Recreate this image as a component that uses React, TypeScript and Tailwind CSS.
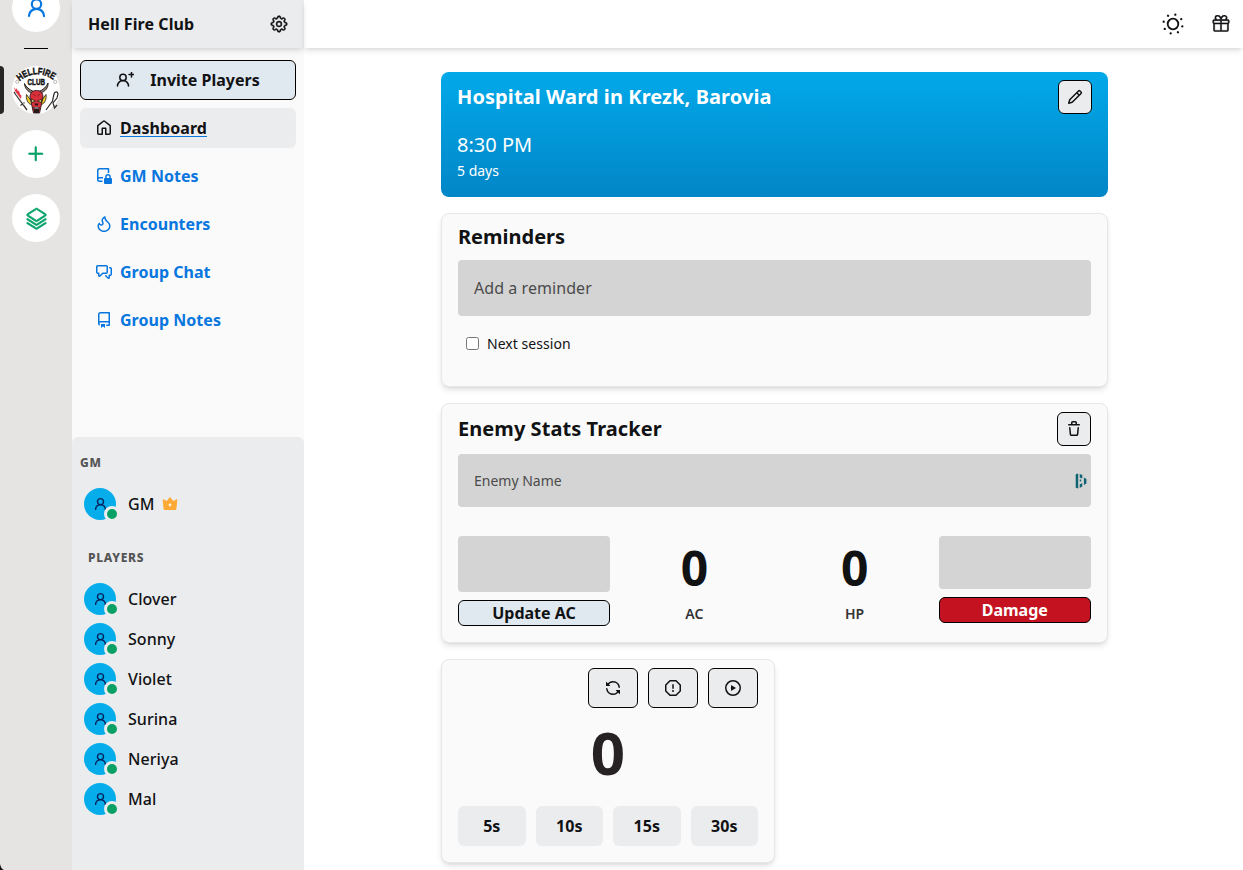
import React from 'react';
import { GoGear, GoGift, GoPlus, GoStack } from 'react-icons/go';

const icons = {
  person:
    'M10.561 8.073a6.005 6.005 0 0 1 3.432 5.142.75.75 0 1 1-1.498.07 4.5 4.5 0 0 0-8.99 0 .75.75 0 0 1-1.498-.07 6.004 6.004 0 0 1 3.431-5.142 3.999 3.999 0 1 1 5.123 0ZM10.5 5a2.5 2.5 0 1 0-5 0 2.5 2.5 0 0 0 5 0Z',
  home:
    'M6.906.664a1.749 1.749 0 0 1 2.187 0l5.25 4.2c.415.332.657.835.657 1.367v7.019A1.75 1.75 0 0 1 13.25 15h-3.5a.75.75 0 0 1-.75-.75V9H7v5.25a.75.75 0 0 1-.75.75h-3.5A1.75 1.75 0 0 1 1 13.25V6.23c0-.531.242-1.034.657-1.366l5.25-4.2Zm1.25 1.171a.25.25 0 0 0-.312 0l-5.25 4.2a.25.25 0 0 0-.094.196v7.019c0 .138.112.25.25.25H5.5V8.25a.75.75 0 0 1 .75-.75h3.5a.75.75 0 0 1 .75.75v5.25h2.75a.25.25 0 0 0 .25-.25V6.23a.25.25 0 0 0-.094-.195Z',
  flame:
    'M9.533.753V.752c.217 2.385 1.463 3.626 2.653 4.81C13.37 6.74 14.498 7.863 14.498 10c0 3.5-3 6-6.5 6S1.5 13.512 1.5 10c0-1.298.536-2.56 1.425-3.286.376-.308.862 0 1.035.454C4.46 8.487 5.581 8.419 6 8c.282-.282.341-.811-.003-1.5C4.34 3.187 7.035.75 8.77.146c.39-.137.726.194.763.607ZM7.998 14.5c2.832 0 5-1.98 5-4.5 0-1.463-.68-2.19-1.879-3.383l-.036-.037c-1.013-1.008-2.3-2.29-2.834-4.434-.322.256-.63.579-.864.953-.432.696-.621 1.58-.046 2.73.473.947.67 2.284-.278 3.232-.61.61-1.545.84-2.403.633a2.79 2.79 0 0 1-1.436-.874A3.198 3.198 0 0 0 3 10c0 2.53 2.164 4.5 4.998 4.5Z',
  chat:
    'M1.75 1h8.5c.966 0 1.75.784 1.75 1.75v5.5A1.75 1.75 0 0 1 10.25 10H7.061l-2.574 2.573A1.458 1.458 0 0 1 2 11.543V10h-.25A1.75 1.75 0 0 1 0 8.25v-5.5C0 1.784.784 1 1.75 1ZM1.5 2.75v5.5c0 .138.112.25.25.25h1a.75.75 0 0 1 .75.75v2.19l2.72-2.72a.749.749 0 0 1 .53-.22h3.5a.25.25 0 0 0 .25-.25v-5.5a.25.25 0 0 0-.25-.25h-8.5a.25.25 0 0 0-.25.25Zm13 2a.25.25 0 0 0-.25-.25h-.5a.75.75 0 0 1 0-1.5h.5c.966 0 1.75.784 1.75 1.75v5.5A1.75 1.75 0 0 1 14.25 12H14v1.543a1.458 1.458 0 0 1-2.487 1.03L9.22 12.28a.749.749 0 0 1 .326-1.275.749.749 0 0 1 .734.215l2.22 2.22v-2.19a.75.75 0 0 1 .75-.75h1a.25.25 0 0 0 .25-.25Z',
  repo:
    'M2 2.5A2.5 2.5 0 0 1 4.5 0h8.75a.75.75 0 0 1 .75.75v12.5a.75.75 0 0 1-.75.75h-2.5a.75.75 0 0 1 0-1.5h1.75v-2h-8a1 1 0 0 0-.714 1.7.75.75 0 1 1-1.072 1.05A2.495 2.495 0 0 1 2 11.5Zm10.5-1h-8a1 1 0 0 0-1 1v6.708A2.486 2.486 0 0 1 4.5 9h8ZM5 12.25a.25.25 0 0 1 .25-.25h3.5a.25.25 0 0 1 .25.25v3.25a.25.25 0 0 1-.4.2l-1.45-1.087a.249.249 0 0 0-.3 0L5.4 15.7a.25.25 0 0 1-.4-.2Z',
  repoLocked:
    'M3.500 0h9A.75.75 0 0 1 13.250.75V5h-1.500V1.500H3.500a1 1 0 0 0-1 1v6.700A2.500 2.500 0 0 1 3.500 9H7v1.500H3.500a1 1 0 0 0 0 2H6.500V14h-3A2.500 2.500 0 0 1 1 11.500v-9A2.500 2.500 0 0 1 3.500 0ZM9.200 10V8.800a2.800 2.800 0 0 1 5.600 0V10h.2a1 1 0 0 1 1 1v4a1 1 0 0 1-1 1H9a1 1 0 0 1-1-1v-4a1 1 0 0 1 1-1Zm1.500 0h2.600V8.800a1.300 1.300 0 0 0-2.600 0Z',
  pencil:
    'M11.013 1.427a1.75 1.75 0 0 1 2.474 0l1.086 1.086a1.75 1.75 0 0 1 0 2.474l-8.61 8.61c-.21.21-.47.364-.756.445l-3.251.93a.75.75 0 0 1-.927-.928l.929-3.25c.081-.286.235-.547.445-.758l8.61-8.61Zm.176 4.823L9.75 4.81l-6.286 6.287a.253.253 0 0 0-.064.108l-.558 1.953 1.953-.558a.253.253 0 0 0 .108-.064Zm1.238-3.763a.25.25 0 0 0-.354 0L10.811 3.75l1.439 1.44 1.263-1.263a.25.25 0 0 0 0-.354Z',
  trash:
    'M11 1.75V3h2.25a.75.75 0 0 1 0 1.5H2.75a.75.75 0 0 1 0-1.5H5V1.75C5 .784 5.784 0 6.75 0h2.5C10.216 0 11 .784 11 1.75ZM4.496 6.675l.66 6.6a.25.25 0 0 0 .249.225h5.19a.25.25 0 0 0 .249-.225l.66-6.6a.75.75 0 0 1 1.492.149l-.66 6.6A1.748 1.748 0 0 1 10.595 15h-5.19a1.75 1.75 0 0 1-1.741-1.575l-.66-6.6a.75.75 0 1 1 1.492-.15ZM6.5 1.75V3h3V1.75a.25.25 0 0 0-.25-.25h-2.5a.25.25 0 0 0-.25.25Z',
  sync:
    'M1.705 8.005a.75.75 0 0 1 .834.656 5.5 5.5 0 0 0 9.592 2.97l-1.204-1.204a.25.25 0 0 1 .177-.427h3.646a.25.25 0 0 1 .25.25v3.646a.25.25 0 0 1-.427.177l-1.38-1.38A7.002 7.002 0 0 1 1.05 8.84a.75.75 0 0 1 .656-.834ZM8 2.5a5.487 5.487 0 0 0-4.131 1.869l1.204 1.204A.25.25 0 0 1 4.896 6H1.25A.25.25 0 0 1 1 5.75V2.104a.25.25 0 0 1 .427-.177l1.38 1.38A7.002 7.002 0 0 1 14.95 7.16a.75.75 0 0 1-1.49.178A5.5 5.5 0 0 0 8 2.5Z',
  stop:
    'M4.47.22A.749.749 0 0 1 5 0h6c.199 0 .389.079.53.22l4.25 4.25c.141.14.22.331.22.53v6a.749.749 0 0 1-.22.53l-4.25 4.25A.749.749 0 0 1 11 16H5a.749.749 0 0 1-.53-.22L.22 11.53A.749.749 0 0 1 0 11V5c0-.199.079-.389.22-.53Zm.84 1.28L1.5 5.31v5.38l3.81 3.81h5.38l3.81-3.81V5.31L10.69 1.5ZM8 4a.75.75 0 0 1 .75.75v3.5a.75.75 0 0 1-1.5 0v-3.5A.75.75 0 0 1 8 4Zm0 8a1 1 0 1 1 0-2 1 1 0 0 1 0 2Z',
  play:
    'M8 0a8 8 0 1 1 0 16A8 8 0 0 1 8 0ZM1.5 8a6.5 6.5 0 1 0 13 0 6.5 6.5 0 0 0-13 0Zm4.879-2.773 4.264 2.559a.25.25 0 0 1 0 .428l-4.264 2.559A.25.25 0 0 1 6 10.559V5.442a.25.25 0 0 1 .379-.215Z',
};

type IconName = keyof typeof icons;

function Icon({ name, className = 'size-4' }: { name: IconName; className?: string }) {
  return (
    <svg viewBox="0 0 16 16" className={className} fill="currentColor" fillRule="evenodd">
      <path d={icons[name]} />
    </svg>
  );
}

function PersonAdd() {
  return (
    <svg viewBox="0 0 18 16" className="mr-4 h-4 w-[18px]" fill="none" stroke="currentColor" strokeWidth="1.500" strokeLinecap="round">
      <circle cx="7" cy="5.500" r="3.200" />
      <path d="M1.500 14a5.500 5.500 0 0 1 11 0M15.500 0v5M13 2.500h5" />
    </svg>
  );
}

function Sun() {
  return (
    <svg viewBox="-11 -11 22 22" className="size-[22px]">
      <circle r="5.300" fill="none" stroke="currentColor" strokeWidth="1.800" />
      <g fill="currentColor" transform="rotate(14)">
        <circle cx="9.600" r="1.150" />
        <circle cx="-9.600" r="1.150" />
        <circle cy="9.600" r="1.150" />
        <circle cy="-9.600" r="1.150" />
        <circle cx="6.800" cy="6.800" r="1.150" />
        <circle cx="-6.800" cy="6.800" r="1.150" />
        <circle cx="6.800" cy="-6.800" r="1.150" />
        <circle cx="-6.800" cy="-6.800" r="1.150" />
      </g>
    </svg>
  );
}

const nav: { label: string; icon: IconName }[] = [
  { label: 'GM Notes', icon: 'repoLocked' },
  { label: 'Encounters', icon: 'flame' },
  { label: 'Group Chat', icon: 'chat' },
  { label: 'Group Notes', icon: 'repo' },
];

const players = ['Clover', 'Sonny', 'Violet', 'Surina', 'Neriya', 'Mal'];
const timerActions: IconName[] = ['sync', 'stop', 'play'];

function ClubLogo() {
  return (
    <svg viewBox="0 0 48 48" className="size-12">
      <circle cx="24" cy="24" r="24" fill="#fff" />
      <defs>
        <path id="arc" d="M7.500 15.500 Q24 1.500 42.500 14.500" />
      </defs>
      <text fontFamily="Liberation Sans, sans-serif" fontWeight="bold" fontSize="9.500" fill="#151515" stroke="#151515" strokeWidth=".5">
        <textPath href="#arc" textLength="37" lengthAdjust="spacingAndGlyphs">HELLFIRE</textPath>
      </text>
      <text x="15.500" y="18.500" textLength="17.500" lengthAdjust="spacingAndGlyphs" fontFamily="Liberation Sans, sans-serif" fontWeight="bold" fontSize="9" fill="#151515" stroke="#151515" strokeWidth=".5">CLUB</text>
      <circle cx="5.300" cy="15.800" r="1.600" fill="none" stroke="#999" strokeWidth=".7" />
      <circle cx="43.200" cy="15.800" r="1.600" fill="none" stroke="#999" strokeWidth=".7" />
      <path d="M20 27C16 26 12.500 22 12.500 17.500c1.500 3.500 4.500 6 9 8M28.500 27c5-1.500 8-5.500 7.500-10c-1.500 4-4.500 6.500-9 8.500" fill="#8b7d70" stroke="#292321" strokeWidth="1" />
      <path d="M18.500 34l-4-5.500c-.8 4 1 9 4.500 10M30 34l4-5.500c.8 4-1 9-4.500 10" fill="#e8cf2c" stroke="#251c18" strokeWidth=".8" />
      <path d="M18 31c0-4.500 3-6.500 6.500-6.500s6.500 2 6.500 6.500l-1.500 7-2 9h-6L19.500 38z" fill="#d9303c" stroke="#271719" strokeWidth=".9" />
      <path d="M21 28l2.500 2M28 28l-2.500 2" stroke="#6e1720" strokeWidth=".8" />
      <path d="M19 33l4.500 2-3.500 1.500zM30 33l-4.500 2 3.500 1.500z" fill="#f4df80" stroke="#251719" strokeWidth=".8" />
      <path d="M22.500 37.500h4l-.7 2h-2.600zM21.300 41h6.400l-1 6h-4.400z" fill="#271719" />
      <path d="M22.300 42h4.400" stroke="#fff" strokeWidth=".8" />
      <path d="M2 26l13 18M8.500 39.500l4-3" stroke="#3d3533" strokeWidth="1.300" fill="none" />
      <path d="M3.500 27l9 12" stroke="#e5e5e5" strokeWidth=".8" />
      <path d="M2 21l2 3 .5-2 1.500 3.500 1-1 1 4 1.500 1-.5 3.500-6-8z" fill="#e0303f" />
      <path d="M34 44l6.500-9 1.500-7c.7-3 4-2.500 4 0l-1 4-4 5 1.500 5 2.500-3" stroke="#2d2a2a" strokeWidth="1.200" fill="none" />
    </svg>
  );
}

function Member({ name, crown = false }: { name: string; crown?: boolean }) {
  return (
    <li className="flex h-10 items-center gap-3 pl-3">
      <span className="relative flex size-8 items-center justify-center rounded-full bg-[#05aeea] text-[#06225c]">
        <Icon name="person" className="size-[15px]" />
        <span className="absolute -right-[4px] -bottom-[2px] size-[16px] rounded-full border-[3px] border-[#ebecee] bg-[#08a064]" />
      </span>
      <span className="flex items-center gap-2 text-base font-medium tracking-[0.05px] text-[#111214]">
        {name}
        {crown && (
          <svg viewBox="0 0 16 16" className="size-4" fill="#fda935">
            <path d="M1.700 3.400l3.200 1.500L7.400 1.500a.8.8 0 0 1 1.200 0l2.500 3.400 3.200-1.500c.6-.3 1.100.1 1 .7L14.400 13c-.1.700-.5 1-1.100 1H2.700c-.6 0-1-.3-1.100-1L.7 4.100c-.1-.6.400-1 1-.7z" />
            <circle cx="8" cy="9" r="1.400" fill="#fff0d9" />
          </svg>
        )}
      </span>
    </li>
  );
}

export default function App() {
  return (
    <div className="relative flex h-[870px] w-[1243px] overflow-hidden bg-white font-['Noto_Sans',sans-serif] text-[#111214]">
      <aside className="flex w-[72px] shrink-0 flex-col items-center bg-[#e5e4e3]">
        <div className="-mt-4 flex size-12 shrink-0 items-center justify-center rounded-full bg-white text-[#0876df]">
          <Icon name="person" className="size-[23px]" />
        </div>
        <div className="mt-4 h-px w-6 shrink-0 bg-black" />
        <div className="relative mt-[17px] flex w-full justify-center">
          <span className="absolute left-0 h-12 w-1 rounded-r bg-[#262626]" />
          <ClubLogo />
        </div>
        <div className="mt-4 flex size-12 items-center justify-center rounded-full bg-white text-[#08a269]">
          <GoPlus className="size-6" strokeWidth={0.7} />
        </div>
        <div className="mt-4 flex size-12 items-center justify-center rounded-full bg-white text-[#08a269]">
          <GoStack className="size-[23px]" strokeWidth={0.8} />
        </div>
      </aside>

      <aside className="flex w-[232px] shrink-0 flex-col bg-[#fafafa]">
        <header className="flex h-12 shrink-0 items-center justify-between bg-[#ebecee] px-4 font-bold tracking-[0.07px] shadow-md">
          <h1>Hell Fire Club</h1>
          <GoGear className="size-[18px]" strokeWidth={0.7} />
        </header>
        <nav className="flex h-[389px] shrink-0 flex-col gap-2 px-2 pt-3">
          <button className="flex h-10 shrink-0 items-center justify-center rounded-md border border-black bg-[#e0e8f0] font-bold">
            <PersonAdd />
            Invite Players
          </button>
          <a className="flex h-10 shrink-0 items-center gap-2 rounded-md bg-[#ebecee] px-4 font-bold tracking-[0.07px]">
            <Icon name="home" />
            <span className="underline decoration-[#0876df] decoration-1 underline-offset-2">Dashboard</span>
          </a>
          {nav.map(({ label, icon }) => (
            <a key={label} className="flex h-10 shrink-0 items-center gap-2 px-4 font-bold tracking-[0.03px] text-[#0876df]">
              <Icon name={icon} />
              {label}
            </a>
          ))}
        </nav>
        <section className="flex-1 rounded-t-md bg-[#ebecee] pt-4">
          <h2 className="h-5 pl-2 text-xs leading-5 font-extrabold tracking-[0.06em] text-[#555]">GM</h2>
          <ul className="mt-[11px]">
            <Member name="GM" crown />
          </ul>
          <h2 className="mt-6 h-5 pl-4 text-xs leading-5 font-extrabold tracking-[0.06em] text-[#555]">PLAYERS</h2>
          <ul className="mt-[11px]">
            {players.map((p) => (
              <Member key={p} name={p} />
            ))}
          </ul>
        </section>
      </aside>

      <main className="flex-1">
        <header className="flex h-12 items-center justify-end gap-[28px] pr-[13px] shadow-md">
          <Sun />
          <GoGift className="size-[18px]" strokeWidth={0.7} />
        </header>
        <div className="ml-[137px] flex w-[667px] flex-col gap-4 pt-6">
          <section className="flex h-[125px] justify-between rounded-lg bg-linear-to-b from-[#02a9e9] to-[#0286c7] px-4 pt-2 text-white">
            <div>
              <h2 className="text-xl leading-[34px] font-bold tracking-[0.09px]">Hospital Ward in Krezk, Barovia</h2>
              <p className="mt-4 text-xl leading-[30px]">8:30 PM</p>
              <p className="text-sm leading-[22px]">5 days</p>
            </div>
            <button className="flex size-[34px] items-center justify-center rounded-md border border-black bg-[#ebecee] text-[#111214]">
              <Icon name="pencil" />
            </button>
          </section>

          <section className="h-[174px] rounded-lg border border-[#e7e7e7] bg-[#fafafa] px-4 pt-2 shadow-md">
            <h2 className="text-xl leading-[30px] font-bold">Reminders</h2>
            <div className="mt-2 flex h-14 items-center rounded bg-[#d4d4d4] px-4 text-base tracking-[0.06px] text-[#4b4b4b]">Add a reminder</div>
            <label className="mt-[18px] flex items-center gap-2 pl-2 text-sm tracking-[0.05px]">
              <span className="-mt-px size-[13px] rounded-[2.5px] border border-[#767676] bg-white" />
              Next session
            </label>
          </section>

          <section className="h-[240px] rounded-lg border border-[#e7e7e7] bg-[#fafafa] px-4 pt-2 shadow-md">
            <div className="flex items-center justify-between">
              <h2 className="text-xl font-bold tracking-[0.06px]">Enemy Stats Tracker</h2>
              <button className="flex size-[34px] items-center justify-center rounded-md border border-black bg-[#ebecee]">
                <Icon name="trash" />
              </button>
            </div>
            <div className="mt-2 flex h-[53px] items-center justify-between rounded bg-[#d4d4d4] pr-1 pl-4 text-sm text-[#4b4b4b]">
              Enemy Name
              <svg viewBox="0 0 12 16" className="h-4 w-3" fill="#0e6472">
                <path d="M.7 1.200l2.500-.7v15l-2.500-.7zM4.700 1l2.600 1v3.500l-2.600-1zM4.700 11.500l2.600-1.500V13.500l-2.600 1.500zM8.900 4.500l2.500 1.500v4.500l-2.500 1.500zM4.700 6.500h1.500v2H4.700z" />
              </svg>
            </div>
            <div className="mt-[29px] grid grid-cols-4 gap-2">
              <div className="flex w-[152px] flex-col gap-2">
                <div className="h-14 rounded bg-[#d4d4d4]" />
                <button className="h-[26px] rounded-md border border-black bg-[#e0e8f0] leading-6 font-bold">Update AC</button>
              </div>
              <div className="flex flex-col items-center">
                <span className="h-16 text-5xl leading-[64px] font-bold">0</span>
                <span className="mt-1 text-sm font-semibold text-[#333]">AC</span>
              </div>
              <div className="flex flex-col items-center">
                <span className="h-16 text-5xl leading-[64px] font-bold">0</span>
                <span className="mt-1 text-sm font-semibold text-[#333]">HP</span>
              </div>
              <div className="flex w-[152px] flex-col gap-2">
                <div className="h-[53px] rounded bg-[#d4d4d4]" />
                <button className="h-[26px] rounded-md border border-black bg-[#c41220] leading-6 font-bold text-white">Damage</button>
              </div>
            </div>
          </section>

          <section className="h-[204px] w-[334px] rounded-lg border border-[#e7e7e7] bg-[#fafafa] px-4 pt-2 shadow-md">
            <div className="flex justify-end gap-[10px]">
              {timerActions.map((name) => (
                <button key={name} className="flex h-10 w-[50px] items-center justify-center rounded-md border border-black bg-[#ebecee]">
                  <Icon name={name} />
                </button>
              ))}
            </div>
            <p className="h-[98px] text-center text-6xl leading-[89px] font-bold text-[#262223]">0</p>
            <div className="grid grid-cols-4 gap-[10px]">
              {['5s', '10s', '15s', '30s'].map((t) => (
                <button key={t} className="h-10 rounded-md bg-[#ebecee] font-bold">{t}</button>
              ))}
            </div>
          </section>
        </div>
      </main>
      <svg viewBox="0 0 6 6" className="absolute bottom-0 left-0 size-[6px]" fill="#111">
        <path d="M0 0Q1 5 4 6H0z" />
      </svg>
    </div>
  );
}
